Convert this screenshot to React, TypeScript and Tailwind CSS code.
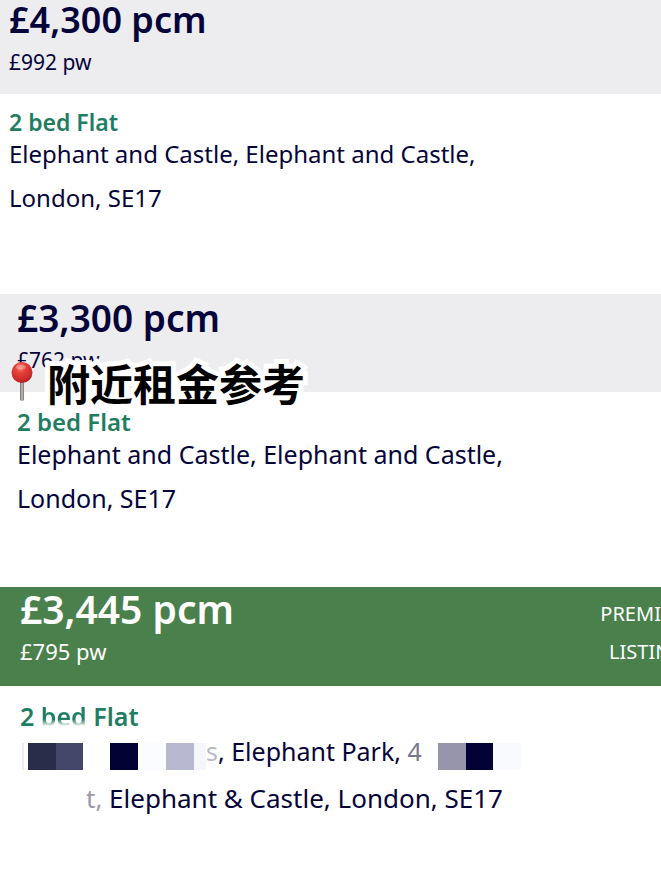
import React from 'react';

const Pin: React.FC = () => (
  <svg className="w-[22px] h-10 shrink-0" viewBox="0 0 22 40" aria-hidden="true">
    <defs>
      <radialGradient id="pinHead" cx="0.42" cy="0.28" r="0.75">
        <stop offset="0" stopColor="#ff8a7c" />
        <stop offset="0.3" stopColor="#e8433c" />
        <stop offset="0.75" stopColor="#cf2b2b" />
        <stop offset="1" stopColor="#a81d20" />
      </radialGradient>
      <linearGradient id="pinNeedle" x1="0" x2="1" y1="0" y2="0">
        <stop offset="0" stopColor="#6f6462" />
        <stop offset="0.5" stopColor="#c9c2c0" />
        <stop offset="1" stopColor="#7a6f6d" />
      </linearGradient>
    </defs>
    <path d="M9 19h4v19q-2 2-4 0z" fill="url(#pinNeedle)" />
    <circle cx="11" cy="10.5" r="10.5" fill="url(#pinHead)" />
    <ellipse cx="10" cy="5" rx="5" ry="2.5" fill="#fff" opacity="0.25" />
  </svg>
);

const Caption: React.FC = () => (
  <div className="absolute left-[11px] top-[66px] z-10 flex items-center gap-3.5">
    <Pin />
    <p className="text-[43px] leading-[44px] font-bold text-black whitespace-nowrap font-['Noto_Sans_CJK_SC',sans-serif] [-webkit-text-stroke:10px_white] [paint-order:stroke_fill] [stroke-linejoin:round]">
      附近租金参考
    </p>
  </div>
);

// One tile of the mosaic that hides a part of the address
const Tile: React.FC<{ className: string }> = ({ className }) => (
  <span className={`h-[27px] mb-1.5 shrink-0 ${className}`} />
);

type HeaderProps = {
  price: string;
  weekly: string;
  className: string;
  priceClass: string;
  weeklyClass: string;
  badge?: React.ReactNode;
};

const PriceHeader: React.FC<HeaderProps> = ({ price, weekly, className, priceClass, weeklyClass, badge }) => (
  <header className={`flex justify-between ${className}`}>
    <div>
      <h2 className={`font-semibold leading-10 ${priceClass}`}>{price}</h2>
      <p className={`leading-[44px] ${weeklyClass}`}>{weekly}</p>
    </div>
    {badge}
  </header>
);

export default function App() {
  return (
    <main className="min-h-screen overflow-hidden bg-white text-[#04043a] font-['Noto_Sans',sans-serif]">
      <section>
        <PriceHeader
          price="£4,300 pcm"
          weekly="£992 pw"
          className="h-[94px] bg-[#ededef] pl-[9px]"
          priceClass="text-[36px]"
          weeklyClass="text-[21px]"
        />
        <div className="h-[200px] pl-[9px] pt-3.5">
          <h3 className="text-[23px] leading-7 font-semibold text-[#1f7d62]">2 bed Flat</h3>
          <p className="text-[24px] leading-[44px] -mt-1">
            Elephant and Castle, Elephant and Castle,
            <br />
            London, SE17
          </p>
        </div>
      </section>

      <section className="relative">
        <PriceHeader
          price="£3,300 pcm"
          weekly="£762 pw"
          className="h-[98px] bg-[#ededef] pl-[17px] pt-1"
          priceClass="text-[37px]"
          weeklyClass="text-[21px]"
        />
        <Caption />
        <div className="h-[195px] pl-[17px] pt-4">
          <h3 className="text-[24px] leading-7 font-semibold text-[#1f7d62]">2 bed Flat</h3>
          <p className="text-[25px] leading-[44px] -mt-1">
            Elephant and Castle, Elephant and Castle,
            <br />
            London, SE17
          </p>
        </div>
      </section>

      <section>
        <PriceHeader
          price="£3,445 pcm"
          weekly="£795 pw"
          className="h-[99px] bg-[#49804c] pl-5 pt-0.5 text-white"
          priceClass="text-[39px]"
          weeklyClass="text-[22px]"
          badge={
            <p className="w-[100px] -mr-9 shrink-0 pt-1.5 text-center text-[20px] leading-[38px]">
              PREMIUM
              <br />
              LISTING
            </p>
          }
        />
        <div className="pl-5 pt-4">
          <h3 className="text-[25px] leading-7 font-semibold text-[#1f7d62]">
            2{' '}
            <span className="bg-linear-to-b from-[#1f7d62] from-60% to-white to-80% bg-clip-text text-transparent">bed</span>{' '}
            Flat
          </h3>
          <div className="flex items-end -mt-1">
            <Tile className="w-0.5 ml-0.5 mr-1 bg-[#ececf0]" />
            <Tile className="w-7 bg-[#2a2d4a]" />
            <Tile className="w-[27px] bg-[#43476a]" />
            <Tile className="w-[27px] bg-white" />
            <Tile className="w-7 bg-[#020234]" />
            <Tile className="w-7 bg-[#fbfcff]" />
            <Tile className="w-7 bg-[#b7b8cf]" />
            <Tile className="w-3 bg-[#f5f6fa]" />
            <p className="whitespace-nowrap text-[25px] leading-[50px]">
              <span className="text-[#b8b9c4]">s</span>, Elephant Park, <span className="text-[#77778e]">4</span>
            </p>
            <Tile className="ml-4 w-7 bg-[#9695ab]" />
            <Tile className="w-[27px] bg-[#020234]" />
            <Tile className="w-7 bg-[#f8fafe]" />
          </div>
          <p className="text-[26px] leading-[44px] pl-[66px] whitespace-nowrap">
            <span className="text-[#9a9aaa]">t,</span> Elephant &amp; Castle, London, SE17
          </p>
        </div>
      </section>
    </main>
  );
}
